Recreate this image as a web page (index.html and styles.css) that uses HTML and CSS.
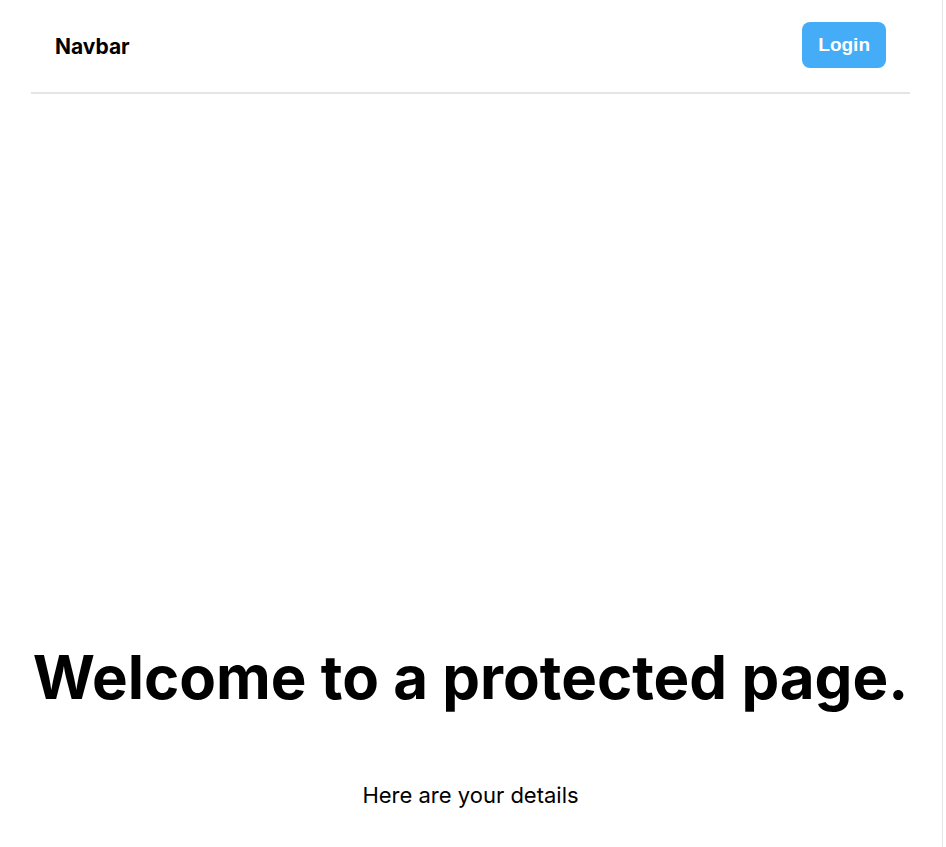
FILE: index.html
```html
<!DOCTYPE html>
<html lang="en">
<head>
<meta charset="utf-8">
<title>Protected page</title>
<link rel="stylesheet" href="styles.css">
</head>
<body>
<div class="page">
<header class="navbar">
<a class="brand" href="#">Navbar</a>
<button class="login" type="button">Login</button>
</header>
<main class="content">
<h1 class="title">Welcome to a protected page.</h1>
<p class="details">Here are your details</p>
</main>
</div>
</body>
</html>
```
FILE: styles.css
```css
* {
  box-sizing: border-box;
}

body {
  margin: 0;
  background: #fff;
  color: #000;
  font-family: Inter, sans-serif;
}

.page {
  display: flex;
  flex-direction: column;
  min-height: 100vh;
  margin-right: 3px;
  padding: 0 32px 0 31px;
  border-right: 1px solid #e5e5e5;
}

.navbar {
  display: flex;
  align-items: flex-end;
  justify-content: space-between;
  padding: 22px 24px 24px;
  border-bottom: 2px solid #e5e5e5;
}

.brand {
  color: inherit;
  font-size: 21px;
  line-height: 42px;
  font-weight: 700;
  text-decoration: none;
}

.login {
  padding: 0 16px;
  border: 0;
  border-radius: 8px;
  background: #45adf7;
  color: #fff;
  font: 700 19px/46px "Liberation Sans", Arial, sans-serif;
}

.content {
  display: flex;
  flex: 1;
  flex-direction: column;
  justify-content: flex-end;
  align-items: center;
  gap: 66px;
  padding-bottom: 36px;
}

.title {
  margin: 0;
  font-size: 60px;
  line-height: 72px;
  font-weight: 700;
  text-align: center;
}

.details {
  margin: 0;
  font-size: 22px;
  line-height: 32px;
}
```
